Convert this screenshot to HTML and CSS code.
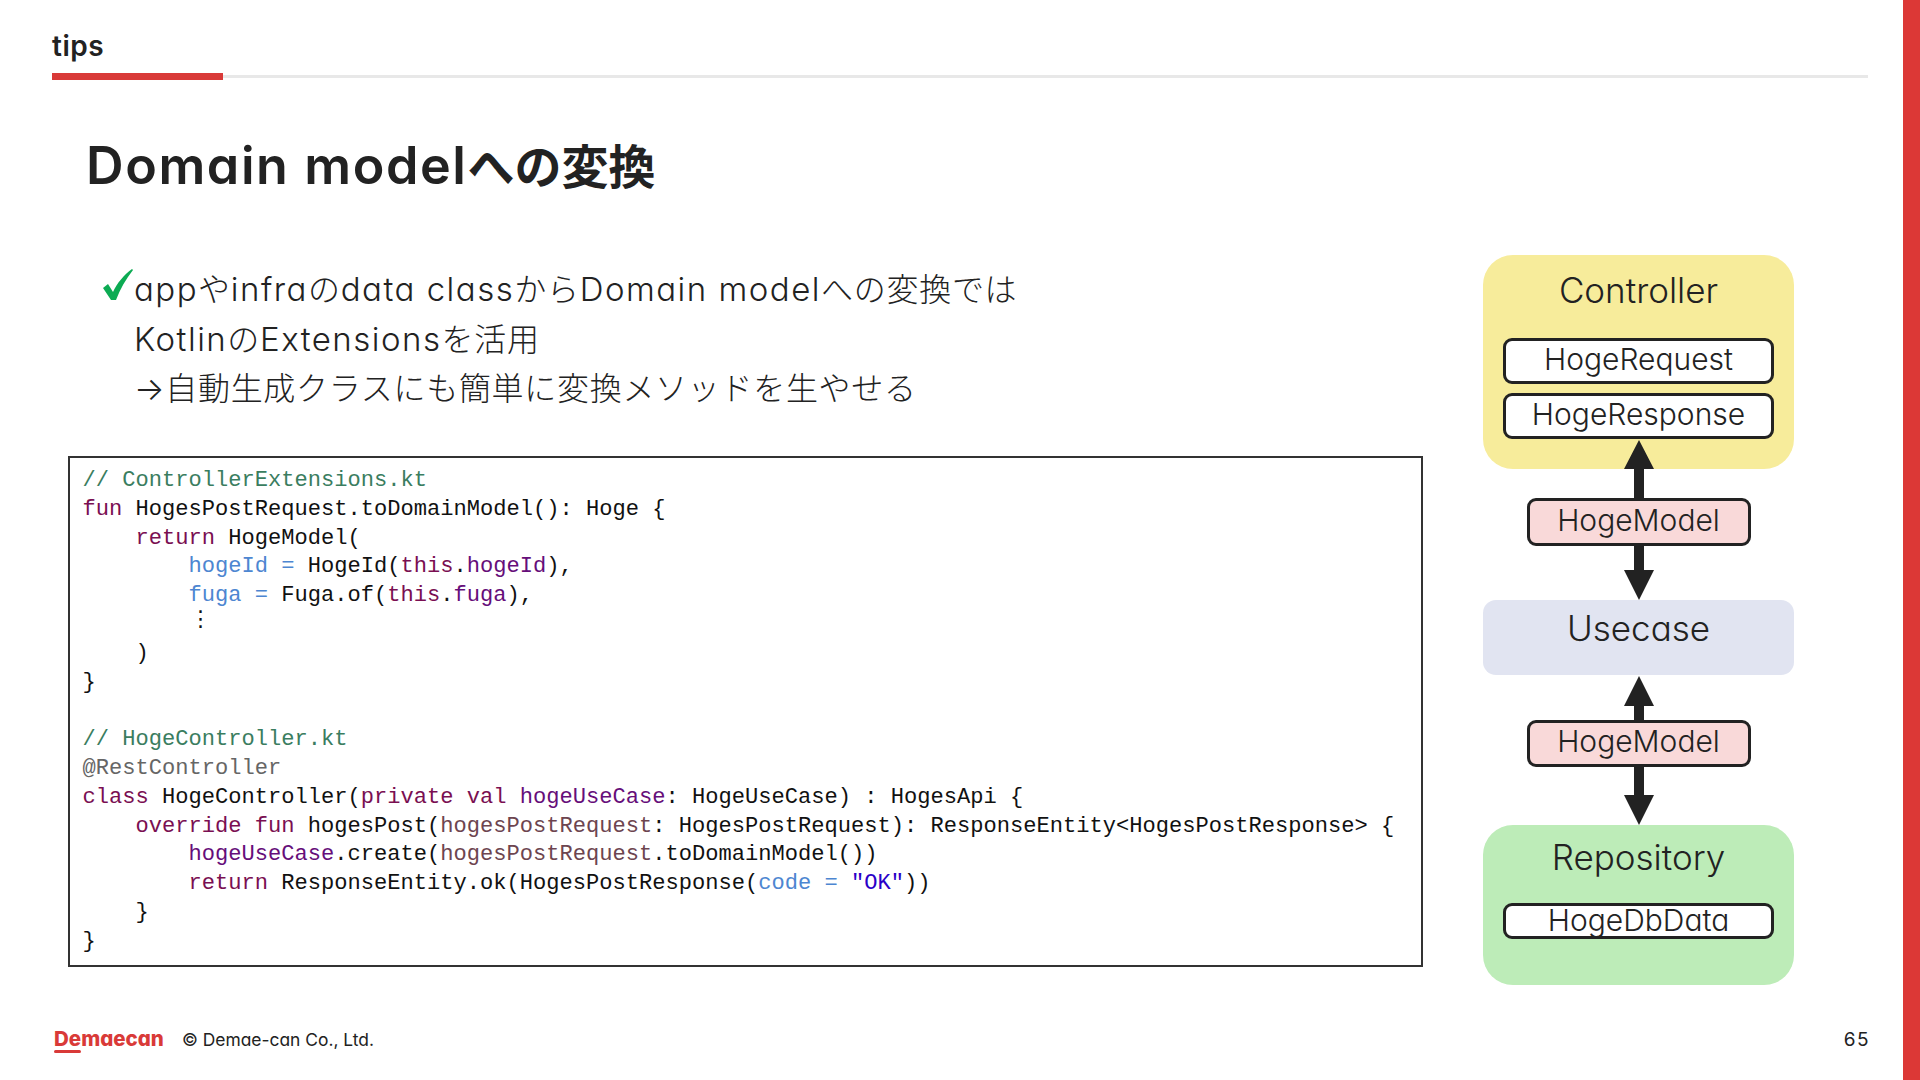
FILE: index.html
```html
<!DOCTYPE html>
<html lang="ja">
<head>
<meta charset="utf-8">
<title>Domain modelへの変換</title>
<link rel="stylesheet" href="styles.css">
</head>
<body>
<div class="slide">
  <div class="main">
    <header class="head">
      <div class="section">tips</div>
      <div class="rule"><div class="rule-accent"></div></div>
    </header>
    <h1 class="title"><span class="en">Domain model</span>への変換</h1>
    <div class="content">
      <div class="left">
        <div class="bullet">
          <svg class="check" viewBox="0 0 32 32"><path d="M0 19 L5 15 L10 23 C14 14 21 6 29 0 L30 1 C23 10 17 20 13 31 L8 31 Z" fill="#0cab53"/></svg>
          <p class="bullet-text"><span class="en">app</span>や<span class="en">infra</span>の<span class="en">data class</span>から<span class="en">Domain model</span>への変換では<br><span class="en">Kotlin</span>の<span class="en">Extensions</span>を活用<br>→自動生成クラスにも簡単に変換メソッドを生やせる</p>
        </div>
<pre class="code"><span class="c">// ControllerExtensions.kt</span>
<span class="k">fun</span> HogesPostRequest.toDomainModel(): Hoge {
    <span class="k">return</span> HogeModel(
        <span class="b">hogeId =</span> HogeId(<span class="k">this</span>.<span class="p">hogeId</span>),
        <span class="b">fuga =</span> Fuga.of(<span class="k">this</span>.<span class="p">fuga</span>),
        <span class="dots">⋮</span>
    )
}

<span class="c">// HogeController.kt</span>
<span class="a">@RestController</span>
<span class="k">class</span> HogeController(<span class="k">private val</span> <span class="p">hogeUseCase</span>: HogeUseCase) : HogesApi {
    <span class="k">override fun</span> hogesPost(<span class="r">hogesPostRequest</span>: HogesPostRequest): ResponseEntity&lt;HogesPostResponse&gt; {
        <span class="p">hogeUseCase</span>.create(<span class="r">hogesPostRequest</span>.toDomainModel())
        <span class="k">return</span> ResponseEntity.ok(HogesPostResponse(<span class="b">code =</span> <span class="s">"OK"</span>))
    }
}</pre>
      </div>
      <div class="diagram">
        <div class="layer controller">
          <div class="layer-name">Controller</div>
          <div class="boxes">
            <div class="box">HogeRequest</div>
            <div class="box">HogeResponse</div>
          </div>
        </div>
        <svg class="link link-a" viewBox="0 0 30 58"><path d="M15 0 L30 29 L20 29 L20 58 L10 58 L10 29 L0 29 Z"/></svg>
        <div class="model">HogeModel</div>
        <svg class="link link-b" viewBox="0 0 30 54"><path d="M10 0 L20 0 L20 24 L30 24 L15 54 L0 24 L10 24 Z"/></svg>
        <div class="layer usecase">
          <div class="layer-name">Usecase</div>
        </div>
        <svg class="link link-c" viewBox="0 0 30 44"><path d="M15 0 L30 30 L20 30 L20 44 L10 44 L10 30 L0 30 Z"/></svg>
        <div class="model model-low">HogeModel</div>
        <svg class="link link-d" viewBox="0 0 30 58"><path d="M10 0 L20 0 L20 28 L30 28 L15 58 L0 28 L10 28 Z"/></svg>
        <div class="layer repository">
          <div class="layer-name">Repository</div>
          <div class="boxes boxes-low">
            <div class="box box-low">HogeDbData</div>
          </div>
        </div>
      </div>
    </div>
    <footer class="foot">
      <div class="logo">Demaecan</div>
      <div class="copy">© Demae-can Co., Ltd.</div>
      <div class="page">65</div>
    </footer>
  </div>
  <div class="edge"></div>
</div>
</body>
</html>
```
FILE: styles.css
```css
* { box-sizing: border-box; }
html, body { margin: 0; padding: 0; background: #fff; }
body {
  font-family: "Inter", "Noto Sans CJK JP", sans-serif;
  font-feature-settings: "cv11" 1;
  color: #222;
}
.slide { display: flex; width: 1920px; height: 1080px; overflow: hidden; }
.main { flex: 1; min-width: 0; display: flex; flex-direction: column; }
.edge { width: 17px; background: #dc3836; }

.head { padding: 28px 35px 0 52px; }
.section { font-size: 28px; font-weight: 600; line-height: 36px; height: 45px; letter-spacing: .5px; }
.rule { height: 3px; margin-top: 2px; background: #e8e8e8; position: relative; }
.rule-accent { position: absolute; left: 0; top: -2px; width: 171px; height: 7px; background: #d93a38; }

.title {
  margin: 56px 0 0 86px;
  font-size: 47px;
  font-weight: 600;
  line-height: 64px;
  height: 64px;
}
.title .en { font-size: 52px; letter-spacing: 1.6px; }

.content { display: flex; margin: 57px 0 0 68px; gap: 60px; }
.left { width: 1355px; }
.bullet { display: flex; align-items: flex-start; padding: 10px 0 0 35px; height: 201px; }
.check { width: 32px; height: 32px; flex: none; margin-top: 4px; }
.bullet-text {
  margin: 0 0 0 -1px;
  font-size: 32px;
  font-weight: 300;
  line-height: 49.5px;
  letter-spacing: .7px;
  white-space: nowrap;
}
.bullet-text .en { font-size: 33px; letter-spacing: 1.5px; }

.code {
  margin: 0;
  width: 1355px;
  height: 511px;
  border: 2px solid #333;
  padding: 9px 0 0 12.5px;
  font-family: "Liberation Mono", monospace;
  font-size: 22.08px;
  line-height: 28.8px;
  color: #111;
  font-feature-settings: normal;
}
.c { color: #3a7d60; }
.k { color: #7a0f52; }
.b { color: #4d86d1; }
.p { color: #660e7a; }
.r { color: #6d4550; }
.a { color: #666; }
.s { color: #2a00c8; }
.dots { font-family: "DejaVu Sans", sans-serif; font-size: 22px; line-height: 0; vertical-align: 4px; margin-left: 1px; }

.diagram { width: 311px; height: 730px; display: flex; flex-direction: column; align-items: center; }
.layer { width: 311px; text-align: center; }
.layer-name { font-size: 35px; font-weight: 300; line-height: 50px; }
.controller { height: 214px; padding: 10px 20px 0; background: #f7ec9b; border-radius: 30px; }
.controller .boxes { margin-top: 23px; }
.usecase { height: 75px; padding-top: 3px; background: #e1e4f1; border-radius: 13px; }
.repository { height: 160px; padding: 7px 20px 0; background: #bdecb8; border-radius: 30px; }
.boxes { display: flex; flex-direction: column; gap: 9px; margin-top: 24px; }
.boxes-low { margin-top: 21px; }
.box, .model {
  border: 3px solid #222;
  border-radius: 9px;
  font-size: 30px;
  font-weight: 300;
  text-align: center;
}
.box { height: 46px; line-height: 37px; background: #fff; }
.box-low { height: 36px; line-height: 28px; }
.model { width: 224px; height: 48px; line-height: 38px; background: #f9d9d9; position: relative; }
.model-low { height: 47px; line-height: 37px; }

.link { width: 30px; fill: #222; flex: none; position: relative; }
.link-a { height: 58px; margin-top: -29px; }
.link-b { height: 54px; }
.link-c { height: 44px; margin-top: 1px; }
.link-d { height: 58px; }

.foot { display: flex; align-items: center; height: 40px; margin-top: 34px; padding: 0 33px 0 54px; }
.logo {
  font-size: 20.5px;
  font-weight: 800;
  color: #d93a38;
  line-height: 28px;
  position: relative;
  width: 128px;
}
.logo::after { content: ""; position: absolute; left: 0; bottom: 0; width: 27px; height: 3px; background: #d93a38; border-radius: 2px; }
.copy { font-size: 17.4px; font-weight: 400; }
.page { margin-left: auto; font-size: 19px; letter-spacing: 1.5px; }
```
